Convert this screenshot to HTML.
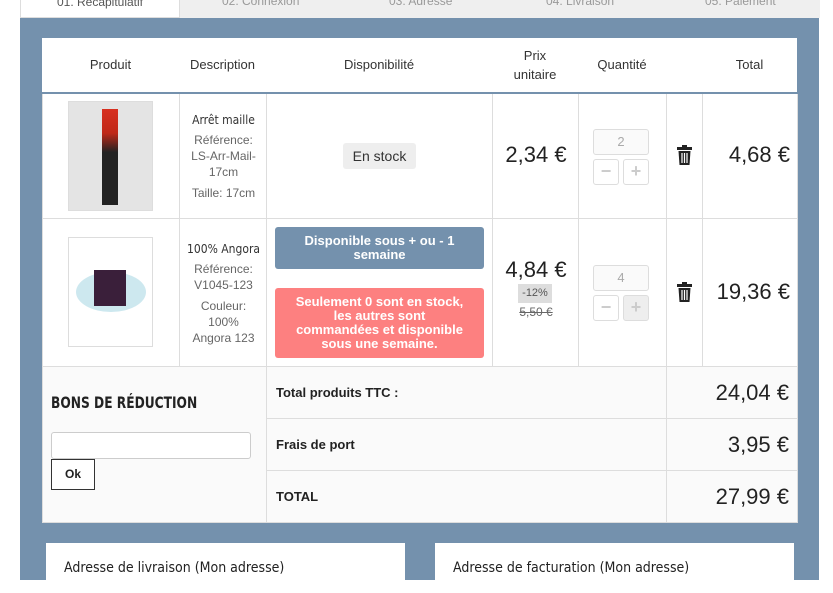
<!DOCTYPE html>
<html><head><meta charset="utf-8"><style>
*{box-sizing:border-box;margin:0;padding:0}
body{width:833px;height:580px;overflow:hidden;background:#fff;font-family:"Liberation Sans",sans-serif;position:relative}
.a{position:absolute}
.panel{left:20px;top:18px;width:799px;height:562px;background:#7491ad}
.tab{top:-8px;height:26px;background:#efefef;color:#999;font-size:12px;text-align:center;line-height:20px}
.c{position:absolute;border-right:1px solid #ddd;border-bottom:1px solid #ddd}
.hd{font-size:13px;color:#333;text-align:center}
.big{font-size:22px;color:#222}
.ct{font-family:"DejaVu Sans Condensed","Liberation Sans Narrow",sans-serif}
.desc{font-size:12px;color:#666;text-align:center;line-height:16px}
.qi{position:absolute;width:56px;height:26px;border:1px solid #ddd;border-radius:3px;background:#fafafa;color:#aaa;font-size:13px;text-align:center;line-height:24px}
.qb{position:absolute;width:26px;height:26px;border:1px solid #ddd;border-radius:3px;background:#fff;color:#ccc;font-size:18px;text-align:center;line-height:22px;font-weight:bold}
</style></head><body>
<div class="a tab" style="left:20px;width:160px;background:#fff;color:#555;border:1px solid #ddd;border-top:0">01. Récapitulatif</div>
<div class="a tab" style="left:180px;width:640px;"></div>
<div class="a" style="left:222px;top:-9px;font-size:12px;color:#999;line-height:20px">02. Connexion</div>
<div class="a" style="left:389px;top:-9px;font-size:12px;color:#999;line-height:20px">03. Adresse</div>
<div class="a" style="left:546px;top:-9px;font-size:12px;color:#999;line-height:20px">04. Livraison</div>
<div class="a" style="left:705px;top:-9px;font-size:12px;color:#999;line-height:20px">05. Paiement</div>
<div class="a panel"></div>

<div class="a" style="left:42px;top:38px;width:755px;height:56px;background:#fff;border-bottom:2px solid #7491ad"></div>
<div class="a hd" style="left:42px;top:57px;width:137px">Produit</div>
<div class="a hd" style="left:179px;top:57px;width:87px">Description</div>
<div class="a hd" style="left:266px;top:57px;width:226px">Disponibilité</div>
<div class="a hd" style="left:492px;top:46px;width:86px;line-height:19px">Prix<br>unitaire</div>
<div class="a hd" style="left:578px;top:57px;width:88px">Quantité</div>
<div class="a hd" style="left:702px;top:57px;width:95px">Total</div>

<div class="a" style="left:42px;top:94px;width:755px;height:273px;background:#fff;border-left:1px solid #ddd"></div>
<div class="c" style="left:42px;top:94px;width:138px;height:125px"></div>
<div class="c" style="left:180px;top:94px;width:87px;height:125px"></div>
<div class="c" style="left:267px;top:94px;width:226px;height:125px"></div>
<div class="c" style="left:493px;top:94px;width:86px;height:125px"></div>
<div class="c" style="left:579px;top:94px;width:88px;height:125px"></div>
<div class="c" style="left:667px;top:94px;width:36px;height:125px"></div>
<div class="c" style="left:703px;top:94px;width:95px;height:125px"></div>
<div class="c" style="left:42px;top:219px;width:138px;height:148px"></div>
<div class="c" style="left:180px;top:219px;width:87px;height:148px"></div>
<div class="c" style="left:267px;top:219px;width:226px;height:148px"></div>
<div class="c" style="left:493px;top:219px;width:86px;height:148px"></div>
<div class="c" style="left:579px;top:219px;width:88px;height:148px"></div>
<div class="c" style="left:667px;top:219px;width:36px;height:148px"></div>
<div class="c" style="left:703px;top:219px;width:95px;height:148px"></div>

<div class="a" style="left:68px;top:101px;width:85px;height:110px;background:#e4e4e4;border:1px solid #ddd"></div>
<div class="a" style="left:102px;top:109px;width:16px;height:96px;background:linear-gradient(#d83020,#c02818 25%,#222 45%,#222)"></div>
<div class="a" style="left:68px;top:237px;width:85px;height:110px;background:#fff;border:1px solid #ddd"></div>
<div class="a" style="left:76px;top:272px;width:70px;height:40px;border-radius:50%;background:#cde8ef"></div>
<div class="a" style="left:94px;top:270px;width:32px;height:36px;background:#3a1f3a"></div>

<div class="a desc ct" style="left:180px;top:112px;width:87px;color:#333">Arrêt maille</div>
<div class="a desc" style="left:180px;top:132px;width:87px">Référence:<br>LS-Arr-Mail-<br>17cm</div>
<div class="a desc" style="left:180px;top:185px;width:87px">Taille: 17cm</div>
<div class="a desc ct" style="left:180px;top:241px;width:87px;color:#333">100% Angora</div>
<div class="a desc" style="left:180px;top:261px;width:87px">Référence:<br>V1045-123</div>
<div class="a desc" style="left:180px;top:298px;width:87px">Couleur:<br>100%<br>Angora 123</div>

<div class="a" style="left:343px;top:143px;width:73px;height:26px;background:#eee;border-radius:3px;font-size:14px;color:#333;text-align:center;line-height:26px">En stock</div>
<div class="a" style="left:275px;top:227px;width:209px;height:42px;background:#7491ad;border-radius:3px;color:#fff;font-weight:bold;font-size:13px;text-align:center;line-height:14px;padding-top:7px">Disponible sous + ou - 1<br>semaine</div>
<div class="a" style="left:275px;top:288px;width:209px;height:70px;background:#fd8080;border-radius:3px;color:#fff;font-weight:bold;font-size:13px;text-align:center;line-height:14px;padding-top:7px">Seulement 0 sont en stock,<br>les autres sont<br>commandées et disponible<br>sous une semaine.</div>

<div class="a big" style="left:493px;top:142px;width:86px;text-align:center">2,34 €</div>
<div class="a big" style="left:493px;top:257px;width:86px;text-align:center">4,84 €</div>
<div class="a" style="left:518px;top:284px;width:34px;height:19px;background:#ddd;font-size:11px;color:#555;text-align:center;line-height:19px">-12%</div>
<div class="a" style="left:493px;top:305px;width:86px;text-align:center;font-size:12px;color:#666;text-decoration:line-through">5,50 €</div>

<div class="qi" style="left:593px;top:129px">2</div>
<div class="qb" style="left:593px;top:159px">−</div>
<div class="qb" style="left:623px;top:159px">+</div>
<div class="qi" style="left:593px;top:265px">4</div>
<div class="qb" style="left:593px;top:295px">−</div>
<div class="qb" style="left:623px;top:295px;background:#eee">+</div>

<svg class="a" style="left:676px;top:145px" width="17" height="20" viewBox="0 0 17 20"><rect x="1" y="2" width="15" height="3" fill="#222"/><rect x="6" y="0" width="5" height="3" fill="#222"/><path d="M2.5 6h12l-1 14h-10z" fill="#222"/><path d="M6 8v10M8.5 8v10M11 8v10" stroke="#fff" stroke-width="1.2"/></svg>
<svg class="a" style="left:676px;top:282px" width="17" height="20" viewBox="0 0 17 20"><rect x="1" y="2" width="15" height="3" fill="#222"/><rect x="6" y="0" width="5" height="3" fill="#222"/><path d="M2.5 6h12l-1 14h-10z" fill="#222"/><path d="M6 8v10M8.5 8v10M11 8v10" stroke="#fff" stroke-width="1.2"/></svg>

<div class="a big" style="left:702px;top:142px;width:88px;text-align:right">4,68 €</div>
<div class="a big" style="left:702px;top:279px;width:88px;text-align:right">19,36 €</div>

<div class="a" style="left:42px;top:367px;width:756px;height:156px;background:#fafafa;border:1px solid #ddd;border-top:0"></div>
<div class="a" style="left:266px;top:367px;width:1px;height:156px;background:#ddd"></div>
<div class="a" style="left:666px;top:367px;width:1px;height:156px;background:#ddd"></div>
<div class="a" style="left:266px;top:418px;width:531px;height:1px;background:#ddd"></div>
<div class="a" style="left:266px;top:470px;width:531px;height:1px;background:#ddd"></div>
<div class="a ct" style="left:51px;top:393px;font-size:16px;color:#222;font-weight:bold;transform:scaleX(.85);transform-origin:left">BONS DE RÉDUCTION</div>
<div class="a" style="left:51px;top:432px;width:200px;height:27px;background:#fff;border:1px solid #ccc;border-radius:3px"></div>
<div class="a" style="left:51px;top:459px;width:44px;height:31px;background:#fff;border:1px solid #333;font-size:12px;font-weight:bold;text-align:center;line-height:28px;color:#222">Ok</div>
<div class="a" style="left:276px;top:385px;font-size:13px;font-weight:bold;color:#222">Total produits TTC :</div>
<div class="a" style="left:276px;top:437px;font-size:13px;font-weight:bold;color:#222">Frais de port</div>
<div class="a" style="left:276px;top:489px;font-size:13px;font-weight:bold;color:#222">TOTAL</div>
<div class="a big" style="left:667px;top:380px;width:122px;text-align:right">24,04 €</div>
<div class="a big" style="left:667px;top:432px;width:122px;text-align:right">3,95 €</div>
<div class="a big" style="left:667px;top:484px;width:122px;text-align:right">27,99 €</div>

<div class="a" style="left:46px;top:543px;width:359px;height:50px;background:#fff"></div>
<div class="a" style="left:435px;top:543px;width:359px;height:50px;background:#fff"></div>
<div class="a ct" style="left:64px;top:560px;font-size:14px;color:#222">Adresse de livraison (Mon adresse)</div>
<div class="a ct" style="left:453px;top:560px;font-size:14px;color:#222">Adresse de facturation (Mon adresse)</div>
</body></html>
